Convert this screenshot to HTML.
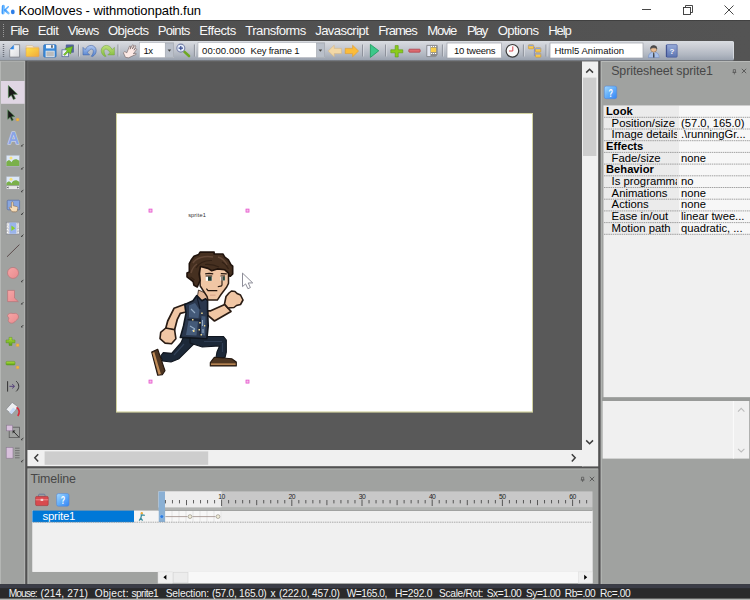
<!DOCTYPE html>
<html><head><meta charset="utf-8"><title>KoolMoves - withmotionpath.fun</title>
<style>
*{box-sizing:border-box;margin:0;padding:0}
html,body{width:750px;height:600px;overflow:hidden;background:#525252}
svg{display:block;position:absolute;left:0;top:0}
svg text{font-family:"Liberation Sans","DejaVu Sans",sans-serif;white-space:pre}
</style></head><body>
<svg width="750" height="600" viewBox="0 0 750 600">
<rect x="0" y="0" width="750" height="600" fill="#525252" />
<rect x="0" y="0" width="750" height="20" fill="#ffffff" />
<defs><linearGradient id="kg" x1="0" y1="0" x2="1" y2="1"><stop offset="0" stop-color="#3f9cff"/><stop offset="1" stop-color="#7cc2ff"/></linearGradient></defs>
<g stroke="url(#kg)" stroke-linecap="round" fill="none"><path d="M3.400 6.400L3.100 12.800" stroke-width="3.200"/><path d="M4.600 10.400L8.300 6.800" stroke-width="1.500"/><path d="M5 10.200L8.600 13.300" stroke-width="2.200"/></g><ellipse cx="12.800" cy="11.900" rx="1.900" ry="2.400" fill="#2e7fe8"/>
<text x="18.6" y="14.7" font-size="13" fill="#000" textLength="182.4" lengthAdjust="spacing" >KoolMoves - withmotionpath.fun</text>
<g stroke="#333" stroke-width=".9" fill="none"><path d="M642 9.5h9"/><rect x="683.5" y="7.5" width="7" height="7"/><path d="M685.5 7.5v-2h7v7h-2"/><path d="M724.5 5.5l9 9M733.5 5.5l-9 9"/></g>
<defs><linearGradient id="mb" x1="0" y1="0" x2="1" y2="0"><stop offset="0" stop-color="#4e4e4e"/><stop offset="1" stop-color="#545454"/></linearGradient></defs>
<rect x="0" y="20" width="750" height="41" fill="url(#mb)" />
<rect x="0" y="20" width="750" height="0.8" fill="#3c3c3c" />
<path d="M3.5 24v13" stroke="#9a9a9a" stroke-width="1" stroke-dasharray="1 1"/>
<text x="10.3" y="35.1" font-size="13.1" fill="#f8f8f8" textLength="18.7" lengthAdjust="spacing" >File</text>
<text x="37.7" y="35.1" font-size="13.1" fill="#f8f8f8" textLength="21.3" lengthAdjust="spacing" >Edit</text>
<text x="67.7" y="35.1" font-size="13.1" fill="#f8f8f8" textLength="31.6" lengthAdjust="spacing" >Views</text>
<text x="108" y="35.1" font-size="13.1" fill="#f8f8f8" textLength="41" lengthAdjust="spacing" >Objects</text>
<text x="157.7" y="35.1" font-size="13.1" fill="#f8f8f8" textLength="32.6" lengthAdjust="spacing" >Points</text>
<text x="199.3" y="35.1" font-size="13.1" fill="#f8f8f8" textLength="37.0" lengthAdjust="spacing" >Effects</text>
<text x="245.3" y="35.1" font-size="13.1" fill="#f8f8f8" textLength="61.0" lengthAdjust="spacing" >Transforms</text>
<text x="315.2" y="35.1" font-size="13.1" fill="#f8f8f8" textLength="53.6" lengthAdjust="spacing" >Javascript</text>
<text x="378.3" y="35.1" font-size="13.1" fill="#f8f8f8" textLength="39.4" lengthAdjust="spacing" >Frames</text>
<text x="427.3" y="35.1" font-size="13.1" fill="#f8f8f8" textLength="30.0" lengthAdjust="spacing" >Movie</text>
<text x="467" y="35.1" font-size="13.1" fill="#f8f8f8" textLength="21.3" lengthAdjust="spacing" >Play</text>
<text x="497.7" y="35.1" font-size="13.1" fill="#f8f8f8" textLength="41.3" lengthAdjust="spacing" >Options</text>
<text x="548.3" y="35.1" font-size="13.1" fill="#f8f8f8" textLength="23.4" lengthAdjust="spacing" >Help</text>
<defs><linearGradient id="tb" x1="0" y1="0" x2="0" y2="1"><stop offset="0" stop-color="#d9dce1"/><stop offset="0.3" stop-color="#cacdd4"/><stop offset="0.7" stop-color="#b1b7c1"/><stop offset="1" stop-color="#99a1ae"/></linearGradient><linearGradient id="hb" x1="0" y1="0" x2="1" y2="1"><stop offset="0" stop-color="#a6daff"/><stop offset=".5" stop-color="#62aefa"/><stop offset="1" stop-color="#3484f4"/></linearGradient><linearGradient id="hb2" x1="0" y1="0" x2="0" y2="1"><stop offset="0" stop-color="#98acda"/><stop offset="1" stop-color="#5c74b0"/></linearGradient><linearGradient id="fold" x1="0" y1="0" x2="1" y2="1"><stop offset="0" stop-color="#ffe24a"/><stop offset="1" stop-color="#f0a83a"/></linearGradient><linearGradient id="pg" x1="0" y1="0" x2="1" y2="1"><stop offset="0" stop-color="#ffffff"/><stop offset="1" stop-color="#d8dade"/></linearGradient><linearGradient id="pink" x1="0" y1="0" x2="1" y2="1"><stop offset="0" stop-color="#f6a6a6"/><stop offset="1" stop-color="#e88a8e"/></linearGradient><linearGradient id="grn" x1="0" y1="0" x2="0" y2="1"><stop offset="0" stop-color="#b4e23a"/><stop offset="1" stop-color="#5aa01a"/></linearGradient></defs>
<path d="M0 41h732.500a1.500 1.500 0 0 1 1.500 1.500v16.500a1.500 1.500 0 0 1-1.500 1.500H0z" fill="url(#tb)"/><path d="M733.500 42.500v16" stroke="#dcdfe4" stroke-width=".8"/>
<path d="M3.5 44v13" stroke="#6a6e78" stroke-width="1.4" stroke-dasharray="1 1"/>
<path d="M14.100 44.700h5.500v12.400h-9.900v-7.600z" fill="url(#pg)" stroke="#7c8088" stroke-width=".8"/><path d="M9.700 49.500l4.400-4.800v4.800z" fill="#2a86ea"/><path d="M14.100 44.700v4.800h-4.400" fill="none" stroke="#e8f0fa" stroke-width=".5"/>
<path d="M26.200 45.800h6.400l1 1.400h5v2h-12.400z" fill="#fbf3dc" stroke="#d8a868" stroke-width=".5"/><rect x="26" y="47.800" width="13" height="8.900" rx=".9" fill="url(#fold)" stroke="#dfa25a" stroke-width=".6"/>
<rect x="43.700" y="44.700" width="12.400" height="12.400" rx="1" fill="#3a8ada" stroke="#2a6ab4" stroke-width=".7"/><rect x="46" y="44.900" width="8.200" height="3.500" fill="#f4f6fa"/><rect x="51.200" y="45.200" width="1.500" height="2.600" fill="#3a4a5a"/><rect x="46" y="51.100" width="8.200" height="5.600" fill="#b9bbbd" stroke="#eef2f6" stroke-width=".7"/>
<rect x="65.800" y="44.600" width="8.100" height="8.100" rx=".8" fill="#55659a"/><rect x="62" y="49.800" width="6.500" height="6.900" fill="#eef1f6" stroke="#5a6c9c" stroke-width=".8"/><path d="M63.600 54.400l3.600-3.600-2.200-2.200 7.700-2.200-2.200 7.700-2.200-2.200-3.600 3.600z" fill="#7ac828" stroke="#4c9014" stroke-width=".5"/>
<path d="M78.5 44.5v12" stroke="#8a8e98" stroke-width="1"/><path d="M79.5 44.5v12" stroke="#e8eaee" stroke-width="1" opacity=".6"/>
<defs><linearGradient id="ug" x1="0" y1="0" x2="0" y2="1"><stop offset="0" stop-color="#b4caf0"/><stop offset="1" stop-color="#4f80d0"/></linearGradient><linearGradient id="rg" x1="0" y1="0" x2="0" y2="1"><stop offset="0" stop-color="#bfe07c"/><stop offset="1" stop-color="#82bc3c"/></linearGradient></defs>
<path d="M83 47.400V54.900H89.600L87.400 52.700C88.600 50.400 90.400 49.100 91.600 49.100C92.800 49.100 93.400 50.400 93.300 51.600C93.200 53.600 92.400 55 91.200 56.200L92.400 56.600C94.800 55.400 96.200 53 96.200 50.700C96.200 47.600 93.800 45.400 91.200 45.400C88.800 45.400 86.600 46.800 85.200 49.600Z" fill="url(#ug)" stroke="#4668a8" stroke-width=".6"/>
<path d="M83 47.400V54.900H89.600L87.400 52.700C88.600 50.400 90.400 49.100 91.600 49.100C92.800 49.100 93.400 50.400 93.300 51.600C93.200 53.600 92.400 55 91.200 56.200L92.400 56.600C94.800 55.400 96.200 53 96.200 50.700C96.200 47.600 93.800 45.400 91.200 45.400C88.800 45.400 86.600 46.800 85.200 49.600Z" transform="translate(197.400 0) scale(-1 1)" fill="url(#rg)" stroke="#7aa84a" stroke-width=".6"/>
<path d="M118 44.5v12" stroke="#8a8e98" stroke-width="1"/><path d="M119 44.5v12" stroke="#e8eaee" stroke-width="1" opacity=".6"/>
<path d="M123.400 52.800l1.400-1.200 2 1.200 2.800-6.800 1.100.4-.6 2.800 2.400-4.400 1.200.6-1.400 3.600 2.600-3.600 1 .8-2 4 2-1.800.8 1-3.400 4.400 2.600-.6.200 1.200-5 2.200-2.400 1.200-3.200-.4z" fill="#fdeae6" stroke="#6c5c5c" stroke-width=".6" stroke-linejoin="round"/>
<rect x="139.4" y="42.6" width="34.2" height="15" fill="#ffffff" stroke="#aeb2ba" stroke-width=".6"/>
<rect x="165.2" y="43" width="8.2" height="14.2" fill="#bac0ca" stroke="#9a9ea6" stroke-width=".5"/>
<path d="M167.6 49.6h3.6l-1.8 2.2z" fill="#444"/>
<text x="143.6" y="54" font-size="9.6" fill="#111" textLength="9.4" lengthAdjust="spacing" >1x</text>
<path d="M184 51.400l5 4.600" stroke="#6ea822" stroke-width="2.600" stroke-linecap="round"/><circle cx="180.800" cy="48.100" r="4" fill="#e6eefb" stroke="#7c86aa" stroke-width="1.100"/><path d="M178.600 48.100h4.400M180.800 45.900v4.400" stroke="#3a4c90" stroke-width="1.200"/>
<path d="M194.4 44.5v12" stroke="#8a8e98" stroke-width="1"/><path d="M195.4 44.5v12" stroke="#e8eaee" stroke-width="1" opacity=".6"/>
<rect x="198" y="42.6" width="126.4" height="15" fill="#ffffff" stroke="#aeb2ba" stroke-width=".6"/>
<rect x="316.4" y="43" width="8" height="14.2" fill="#bac0ca" stroke="#9a9ea6" stroke-width=".5"/>
<path d="M318.6 49.6h3.6l-1.8 2.2z" fill="#444"/>
<text x="202" y="54" font-size="9.5" fill="#111" textLength="43" lengthAdjust="spacing" >00:00.000</text>
<text x="250.6" y="54" font-size="9.5" fill="#111" textLength="49" lengthAdjust="spacing" >Key frame 1</text>
<path d="M328.2 51l6-5.8v3.2h7.2v5.2h-7.2v3.2z" fill="#f2d8a6" stroke="#d8b884" stroke-width=".6"/>
<path d="M358.6 51l-6-5.8v3.2h-7.4v5.2h7.4v3.2z" fill="#fbbc3a" stroke="#e09a2a" stroke-width=".6"/>
<path d="M362.6 44.5v12" stroke="#8a8e98" stroke-width="1"/><path d="M363.6 44.5v12" stroke="#e8eaee" stroke-width="1" opacity=".6"/>
<path d="M370.4 44.4l8.4 6.4-8.4 6.6z" fill="#3cc88a" stroke="#1a9a5a" stroke-width=".8"/>
<path d="M385.6 44.5v12" stroke="#8a8e98" stroke-width="1"/><path d="M386.6 44.5v12" stroke="#e8eaee" stroke-width="1" opacity=".6"/>
<path d="M395.2 45.6h3v4.2h4.6v3h-4.6V57h-3v-4.2h-4.4v-3h4.4z" fill="#8ccc1a" stroke="#5a9a10" stroke-width=".6"/>
<rect x="408.800" y="49.200" width="11.400" height="3" rx=".8" fill="#dc6a70" stroke="#ae3a44" stroke-width=".7"/>
<path d="M426.800 45.400h10.400v9.200l-1.800 2h-8.600z" fill="#e4e8f2" stroke="#77797d" stroke-width=".8"/><rect x="430.400" y="45.600" width="6.600" height="10.600" fill="#8a8a8c"/><rect x="430.800" y="47.600" width="5.400" height="4.600" fill="#fbd04a"/><g fill="#fff"><rect x="431" y="46" width="1.200" height="1"/><rect x="433" y="46" width="1.200" height="1"/><rect x="435" y="46" width="1.200" height="1"/><rect x="431" y="53" width="1.200" height="1"/><rect x="433" y="53" width="1.200" height="1"/><rect x="435" y="53" width="1.200" height="1"/></g>
<path d="M442.4 44.5v12" stroke="#8a8e98" stroke-width="1"/><path d="M443.4 44.5v12" stroke="#e8eaee" stroke-width="1" opacity=".6"/>
<rect x="447" y="43" width="54.6" height="15" fill="#ffffff" stroke="#9ea2aa" stroke-width=".7"/>
<text x="454" y="54" font-size="9.5" fill="#111" textLength="41.6" lengthAdjust="spacing" >10 tweens</text>
<circle cx="512.400" cy="50.800" r="6.300" fill="#fbfbfb" stroke="#3a3a3a" stroke-width="1.200"/><path d="M512.800 46.400v4.600h-3.800" stroke="#d8444c" stroke-width="1" fill="none"/>
<path d="M523.4 44.5v12" stroke="#8a8e98" stroke-width="1"/><path d="M524.4 44.5v12" stroke="#e8eaee" stroke-width="1" opacity=".6"/>
<path d="M534.400 48.600v7h1.200M534.400 50h1.200M533.400 47h1v1.600" stroke="#7a86c8" stroke-width=".8" fill="none"/><g stroke="#c08a2a" stroke-width=".5"><rect x="528.400" y="44.800" width="5.200" height="4" rx=".6" fill="#f8c84a"/><rect x="535.400" y="47.800" width="5.400" height="4.200" rx=".6" fill="#f8c84a"/><rect x="535.400" y="53.200" width="5.400" height="4" rx=".6" fill="#f8c84a"/></g><rect x="528.600" y="44.900" width="4.800" height="1.300" fill="#88a2dc"/><rect x="535.600" y="47.900" width="5" height="1.300" fill="#88a2dc"/><rect x="535.600" y="53.300" width="5" height="1.300" fill="#88a2dc"/>
<path d="M546 44.5v12" stroke="#8a8e98" stroke-width="1"/><path d="M547 44.5v12" stroke="#e8eaee" stroke-width="1" opacity=".6"/>
<rect x="550" y="43" width="93" height="15" fill="#ffffff" stroke="#9ea2aa" stroke-width=".7"/>
<text x="554.4" y="54" font-size="9.5" fill="#111" textLength="69.6" lengthAdjust="spacing" >Html5 Animation</text>
<path d="M648.400 57.600c0-3.800 2.200-5.600 5.400-5.600s5.400 1.800 5.400 5.600z" fill="#a9c1ea" stroke="#6a84b8" stroke-width=".5"/><path d="M652.600 52.200h2.400l-1.200 3.600z" fill="#fff"/><path d="M653.800 52.600v5" stroke="#1a1a1a" stroke-width="1.100"/><circle cx="653.700" cy="49" r="3.100" fill="#e9bc94" stroke="#7a5c40" stroke-width=".5"/><path d="M650.500 48.800a3.200 3.200 0 0 1 6.400 0c-1.200-1.400-5.200-1.400-6.400 0z" fill="#4a4a4c" stroke="#4a4a4c" stroke-width=".6"/>
<rect x="666.200" y="44.600" width="11" height="12.600" rx="1" fill="url(#hb2)" stroke="#44589a" stroke-width=".6"/><path d="M666.600 45v12" stroke="#3a4c8c" stroke-width=".9"/>
<text x="669.6" y="54.2" font-size="8" fill="#f4f6fc" font-weight="bold" >?</text>
<rect x="0" y="60.6" width="25.2" height="524.6" fill="#b4b6b4" />
<rect x="1" y="61.6" width="23.2" height="523.6" fill="#a0a2a0" />
<rect x="1" y="81" width="23.6" height="22.8" fill="#e0d6e4" />
<path d="M8.4 85.6 L8.4 97.8 L11.3 95.2 L13.4 99.6 L15.4 98.6 L13.3 94.4 L17.4 94.2z" fill="#1a1a1a" stroke="#4c8a4c" stroke-width=".6" stroke-linejoin="round"/>
<path d="M7.8 109.8 L7.8 119.3 L10.1 117.3 L11.7 120.7 L13.3 119.9 L11.6 116.7 L14.8 116.5z" fill="#1a1a1a" stroke="#4c8a4c" stroke-width=".6" stroke-linejoin="round"/>
<rect x="16.2" y="118.2" width="2.8" height="2.8" rx=".8" fill="#f6b83a" stroke="#c89a5a" stroke-width=".4"/>
<text x="7.8" y="144" font-size="15.8" fill="#8aa4e6" font-weight="bold" stroke="#d6e0f8" stroke-width="1" paint-order="stroke">A</text>
<path d="M21.4 146.2l2-2" stroke="#3a3a3a" stroke-width=".9"/><path d="M21.2 146.6v-1.6l1.6 1.6z" fill="#3a3a3a"/>
<rect x="6.2" y="155.2" width="13.4" height="11" fill="#dce8f8" stroke="#a8acb4" stroke-width=".6"/>
<circle cx="11" cy="158.0" r="1.5" fill="#f6e27a"/>
<path d="M6.4 162.2c1.6-2.6 3.4-2.6 5 0 1.6-3 4.6-4.4 8-1.4v5.2H6.4z" fill="#7ab04a"/>
<path d="M21.4 169.2l2-2" stroke="#3a3a3a" stroke-width=".9"/><path d="M21.2 169.6v-1.6l1.6 1.6z" fill="#3a3a3a"/>
<rect x="6.2" y="176.4" width="13.4" height="9.4" fill="#dce8f8" stroke="#a8acb4" stroke-width=".6"/>
<circle cx="11" cy="179.20000000000002" r="1.5" fill="#f6e27a"/>
<path d="M6.4 183.4c1.6-2.6 3.4-2.6 5 0 1.6-3 4.6-4.4 8-1.4v3.6000000000000005H6.4z" fill="#7ab04a"/>
<rect x="6.2" y="185.8" width="13.4" height="3.6" fill="#e8e8e8" stroke="#8a8a92" stroke-width=".5"/><path d="M7 187.6l1.4-1v2zM18.8 187.6l-1.4-1v2z" fill="#223"/>
<path d="M21.4 191.79999999999998l2-2" stroke="#3a3a3a" stroke-width=".9"/><path d="M21.2 192.2v-1.6l1.6 1.6z" fill="#3a3a3a"/>
<rect x="7.2" y="200.2" width="12.4" height="9.6" rx="1" fill="#88a6e0" stroke="#5a6ea0" stroke-width=".7"/>
<path d="M11.4 202.2c.8-.8 1.8-.4 1.8.6v3l3.6.8c.8.2 1.2.8 1 1.6l-.6 2.6c-.2.6-.6 1-1.4 1h-3c-.6 0-1-.2-1.400-.8l-2-3c-.4-.8.6-1.600 1.400-.800l.6.600z" fill="#f6dcb8" stroke="#7a5a3a" stroke-width=".5"/>
<path d="M21.4 214.6l2-2" stroke="#3a3a3a" stroke-width=".9"/><path d="M21.2 215.0v-1.6l1.6 1.6z" fill="#3a3a3a"/>
<rect x="6.2" y="222.2" width="13.4" height="12" fill="#e6e6ea" stroke="#7a7e88" stroke-width=".6"/><rect x="9.4" y="222.6" width="7" height="11.2" fill="#9ab4ea"/><path d="M11.4 225.4l3.8 2.8-3.8 2.8z" fill="#8ad02a"/>
<g fill="#fff" stroke="#9a9a9a" stroke-width=".3"><rect x="6.8" y="223.2" width="1.8" height="1.6"/><rect x="6.8" y="226" width="1.8" height="1.6"/><rect x="6.8" y="228.800" width="1.8" height="1.6"/><rect x="6.8" y="231.600" width="1.8" height="1.6"/><rect x="17.2" y="223.2" width="1.8" height="1.6"/><rect x="17.2" y="226" width="1.8" height="1.6"/><rect x="17.2" y="228.8" width="1.8" height="1.6"/><rect x="17.2" y="231.6" width="1.8" height="1.6"/></g>
<path d="M21.4 236.6l2-2" stroke="#3a3a3a" stroke-width=".9"/><path d="M21.2 237.0v-1.6l1.6 1.6z" fill="#3a3a3a"/>
<path d="M7 256.800L19.400 244.600" stroke="#5c4c4c" stroke-width="1"/>
<circle cx="13" cy="272.900" r="5.500" fill="url(#pink)" stroke="#b87478" stroke-width=".7"/>
<path d="M21.4 281.8l2-2" stroke="#3a3a3a" stroke-width=".9"/><path d="M21.2 282.20000000000005v-1.6l1.6 1.6z" fill="#3a3a3a"/>
<path d="M7.600 290.400h6.900v7.600l3.800 3.600H7.600z" fill="url(#pink)" stroke="#b87478" stroke-width=".7"/>
<path d="M21.4 304.2l2-2" stroke="#3a3a3a" stroke-width=".9"/><path d="M21.2 304.6v-1.6l1.6 1.6z" fill="#3a3a3a"/>
<path d="M9.600 313.500c1.800-.8 3.200.3 4.400 0 1.800-.5 3.600.2 4.300 2.200.600 1.900-.5 3.400-1.600 4.300-1.300 1-2.200 2.600-4 3.100-1.700.400-3.600-.4-4.300-1.900-.5-1.200.6-2 .4-3.100-.2-1-1.400-1.500-1.200-2.700.200-1 1-1.600 2-1.900z" fill="url(#pink)" stroke="#b87478" stroke-width=".7"/>
<path d="M21.4 327.0l2-2" stroke="#3a3a3a" stroke-width=".9"/><path d="M21.2 327.40000000000003v-1.6l1.6 1.6z" fill="#3a3a3a"/>
<path d="M9 337.400h3v2.600h3v2.800h-3v2.600H9v-2.600H6v-2.800h3z" fill="url(#grn)" stroke="#5a9420" stroke-width=".5"/>
<rect x="16.2" y="343.800" width="2.800" height="2.800" rx=".6" fill="#f6b83a" stroke="#c89a5a" stroke-width=".4"/>
<rect x="6" y="361.400" width="9" height="3.600" rx="1" fill="url(#grn)" stroke="#5a9420" stroke-width=".5"/>
<rect x="16.2" y="366" width="2.800" height="2.800" rx=".6" fill="#f6b83a" stroke="#c89a5a" stroke-width=".4"/>
<path d="M7.600 381.200v10.400" stroke="#333" stroke-width="1"/><path d="M9.400 386.300h4.600M12.200 384.200l2.400 2.100-2.400 2.100" stroke="#54407a" stroke-width="1" fill="none"/><path d="M16.200 381.200c3.400 3 3.400 7.200 0 10.200" stroke="#333" stroke-width="1" fill="none"/>
<path d="M12.200 402.400l6 4.600-6.600 7.200-5.600-4.800z" fill="#eceef0" stroke="#7a7e84" stroke-width=".6"/><path d="M15.800 409.600l-4.200 4.600-2.400-2 4-4.800z" fill="#c8daf6"/><path d="M16.600 407.400c2.800 2 3.200 5.400 1.200 8.600" stroke="#d82a3a" stroke-width="1.500" fill="none"/>
<rect x="9.200" y="427.200" width="10.200" height="10.400" fill="none" stroke="#5a5a5a" stroke-width=".8"/><rect x="6.600" y="425.200" width="6" height="5.600" fill="#d8c0dc" stroke="#8a7a90" stroke-width=".6"/><path d="M13 431l5.800 6" stroke="#222" stroke-width=".9"/><path d="M12.600 430.600h2.800l-2.800 2.800z" fill="#222"/>
<path d="M21.4 439.8l2-2" stroke="#3a3a3a" stroke-width=".9"/><path d="M21.2 440.20000000000005v-1.6l1.6 1.6z" fill="#3a3a3a"/>
<rect x="6.200" y="447.400" width="6.800" height="10.800" fill="#d8c0dc" stroke="#8a7a90" stroke-width=".6"/><path d="M15 448.200h4.600M15 450.600h4.600M15 453h4.600M15 455.400h4.600M15 457.800h4.600" stroke="#666" stroke-width=".8"/>
<path d="M21.4 461.8l2-2" stroke="#3a3a3a" stroke-width=".9"/><path d="M21.2 462.20000000000005v-1.6l1.6 1.6z" fill="#3a3a3a"/>
<rect x="27.4" y="61" width="555" height="389" fill="#6a6a6a" />
<rect x="28.2" y="61.6" width="554" height="388.4" fill="#595959" />
<rect x="116" y="113" width="417" height="299.6" fill="#d2d2a0" />
<rect x="117" y="114" width="415" height="297.4" fill="#ffffff" />
<rect x="582" y="61.4" width="16.2" height="405" fill="#f0f0f0" />
<rect x="583" y="77.6" width="13.4" height="78.4" fill="#cdcdcd" />
<path d="M586.200 72.600l3.400-3.400 3.400 3.400" stroke="#3c3c3c" stroke-width="1.500" fill="none"/>
<path d="M586.200 440.400l3.400 3.400 3.400-3.400" stroke="#3c3c3c" stroke-width="1.500" fill="none"/>
<rect x="27.4" y="450" width="556" height="16.2" fill="#f0f0f0" />
<rect x="44.6" y="451.4" width="163.6" height="13.4" fill="#cdcdcd" />
<path d="M38.200 454.200l-3.400 3.600 3.400 3.600" stroke="#3c3c3c" stroke-width="1.500" fill="none"/>
<path d="M571.800 454.200l3.400 3.600-3.400 3.600" stroke="#3c3c3c" stroke-width="1.500" fill="none"/>
<rect x="600.6" y="61" width="149.4" height="524.2" fill="#b8bab8" />
<rect x="601.7" y="62" width="148.3" height="523.2" fill="#a0a2a0" />
<text x="611.2" y="75.2" font-size="12.4" fill="#474747" textLength="101.8" lengthAdjust="spacing" >Spritesheet sprite1</text>
<path d="M733.3 69.6h2.200v2.800h-2.200zM732.5 72.4h3.800M734.4 72.4v2" stroke="#5a5a5a" stroke-width=".8" fill="none"/>
<path d="M741.8 68.8l4.400 4.400M746.2 68.8l-4.400 4.400" stroke="#555" stroke-width=".9"/>
<rect x="604.3" y="86.1" width="12.4" height="12.6" rx="1.800" fill="url(#hb)" stroke="#5686d4" stroke-width=".6"/>
<g transform="translate(610.70 96.60) scale(.72 1)">
<text x="0" y="0" font-size="10" fill="#fff" font-weight="bold" text-anchor="middle" >?</text>
</g>
<rect x="603" y="105.4" width="147" height="292" fill="#c8c8c8" />
<rect x="604" y="105.8" width="146" height="291.4" fill="#f0f0f0" />
<rect x="604" y="105.8" width="75" height="128.4" fill="#ebebeb" />
<rect x="679" y="105.8" width="71" height="128.4" fill="#f7f7f7" />
<clipPath id="lc"><rect x="604" y="105" width="73" height="130"/></clipPath>
<clipPath id="rc0"><rect x="604" y="105.90" width="146" height="11.20"/></clipPath>
<text x="606" y="114.8" font-size="11.2" fill="#000" font-weight="bold" clip-path="url(#rc0)">Look</text>
<path d="M604 117.30H750" stroke="#8c8c8c" stroke-width=".8" stroke-dasharray="1.5 .7"/>
<clipPath id="rc1"><rect x="604" y="117.60" width="146" height="11.20"/></clipPath>
<g clip-path="url(#lc)">
<text x="611.6" y="126.5" font-size="11.3" fill="#000" clip-path="url(#rc1)">Position/size</text>
</g>
<text x="681" y="126.5" font-size="11.2" fill="#000" clip-path="url(#rc1)">(57.0, 165.0)</text>
<path d="M604 129.00H750" stroke="#8c8c8c" stroke-width=".8" stroke-dasharray="1.5 .7"/>
<clipPath id="rc2"><rect x="604" y="129.30" width="146" height="11.20"/></clipPath>
<g clip-path="url(#lc)">
<text x="611.6" y="138.2" font-size="11.3" fill="#000" clip-path="url(#rc2)">Image details</text>
</g>
<text x="681" y="138.2" font-size="11.2" fill="#000" clip-path="url(#rc2)">.\runningGr...</text>
<path d="M604 140.70H750" stroke="#8c8c8c" stroke-width=".8" stroke-dasharray="1.5 .7"/>
<clipPath id="rc3"><rect x="604" y="141.00" width="146" height="11.20"/></clipPath>
<text x="606" y="149.9" font-size="11.2" fill="#000" font-weight="bold" clip-path="url(#rc3)">Effects</text>
<path d="M604 152.40H750" stroke="#8c8c8c" stroke-width=".8" stroke-dasharray="1.5 .7"/>
<clipPath id="rc4"><rect x="604" y="152.70" width="146" height="11.20"/></clipPath>
<g clip-path="url(#lc)">
<text x="611.6" y="161.6" font-size="11.3" fill="#000" clip-path="url(#rc4)">Fade/size</text>
</g>
<text x="681" y="161.6" font-size="11.2" fill="#000" clip-path="url(#rc4)">none</text>
<path d="M604 164.10H750" stroke="#8c8c8c" stroke-width=".8" stroke-dasharray="1.5 .7"/>
<clipPath id="rc5"><rect x="604" y="164.40" width="146" height="11.20"/></clipPath>
<text x="606" y="173.3" font-size="11.2" fill="#000" font-weight="bold" clip-path="url(#rc5)">Behavior</text>
<path d="M604 175.80H750" stroke="#8c8c8c" stroke-width=".8" stroke-dasharray="1.5 .7"/>
<clipPath id="rc6"><rect x="604" y="176.10" width="146" height="11.20"/></clipPath>
<g clip-path="url(#lc)">
<text x="611.6" y="185.0" font-size="11.3" fill="#000" clip-path="url(#rc6)">Is programmable</text>
</g>
<text x="681" y="185.0" font-size="11.2" fill="#000" clip-path="url(#rc6)">no</text>
<path d="M604 187.50H750" stroke="#8c8c8c" stroke-width=".8" stroke-dasharray="1.5 .7"/>
<clipPath id="rc7"><rect x="604" y="187.80" width="146" height="11.20"/></clipPath>
<g clip-path="url(#lc)">
<text x="611.6" y="196.7" font-size="11.3" fill="#000" clip-path="url(#rc7)">Animations</text>
</g>
<text x="681" y="196.7" font-size="11.2" fill="#000" clip-path="url(#rc7)">none</text>
<path d="M604 199.20H750" stroke="#8c8c8c" stroke-width=".8" stroke-dasharray="1.5 .7"/>
<clipPath id="rc8"><rect x="604" y="199.50" width="146" height="11.20"/></clipPath>
<g clip-path="url(#lc)">
<text x="611.6" y="208.4" font-size="11.3" fill="#000" clip-path="url(#rc8)">Actions</text>
</g>
<text x="681" y="208.4" font-size="11.2" fill="#000" clip-path="url(#rc8)">none</text>
<path d="M604 210.90H750" stroke="#8c8c8c" stroke-width=".8" stroke-dasharray="1.5 .7"/>
<clipPath id="rc9"><rect x="604" y="211.20" width="146" height="11.20"/></clipPath>
<g clip-path="url(#lc)">
<text x="611.6" y="220.1" font-size="11.3" fill="#000" clip-path="url(#rc9)">Ease in/out</text>
</g>
<text x="681" y="220.1" font-size="11.2" fill="#000" clip-path="url(#rc9)">linear twee...</text>
<path d="M604 222.60H750" stroke="#8c8c8c" stroke-width=".8" stroke-dasharray="1.5 .7"/>
<clipPath id="rc10"><rect x="604" y="222.90" width="146" height="11.20"/></clipPath>
<g clip-path="url(#lc)">
<text x="611.6" y="231.8" font-size="11.3" fill="#000" clip-path="url(#rc10)">Motion path</text>
</g>
<text x="681" y="231.8" font-size="11.2" fill="#000" clip-path="url(#rc10)">quadratic, ...</text>
<path d="M604 234.30H750" stroke="#8c8c8c" stroke-width=".8" stroke-dasharray="1.5 .7"/>
<rect x="602" y="397.4" width="148" height="3.6" fill="#989a98" />
<rect x="602.6" y="401" width="146.6" height="57.6" fill="#f0f0f0" />
<path d="M733.400 401v57.600" stroke="#fbfbfb" stroke-width="1"/>
<path d="M738 411.600l3.200-3.200 3.200 3.200" stroke="#bdbdbd" stroke-width="1.100" fill="none"/>
<path d="M738 448.800l3.200 3.200 3.200-3.200" stroke="#bdbdbd" stroke-width="1.100" fill="none"/>
<rect x="27.4" y="468.4" width="570.8" height="117" fill="#b8bab8" />
<rect x="28.4" y="469.4" width="569.8" height="116" fill="#a0a2a0" />
<text x="30.4" y="483.3" font-size="12.4" fill="#474747" textLength="45.6" lengthAdjust="spacing" >Timeline</text>
<path d="M581.5 477.20000000000005h2.200v2.800h-2.200zM580.7 480.0h3.800M582.6 480.0v2" stroke="#5a5a5a" stroke-width=".8" fill="none"/>
<path d="M589.8 476.8l4.400 4.400M594.2 476.8l-4.400 4.400" stroke="#555" stroke-width=".9"/>
<rect x="38.600" y="494.200" width="6.400" height="3" rx="1" fill="none" stroke="#6a7a9a" stroke-width="1"/><rect x="35.600" y="496.400" width="12.600" height="9.200" rx="1.200" fill="#d84a4e" stroke="#a83236" stroke-width=".6"/><path d="M35.600 499.800h12.600" stroke="#f0a0a0" stroke-width=".8"/><rect x="40.600" y="498.800" width="2.600" height="2.200" fill="#f4d0d0"/>
<rect x="56.6" y="493.6" width="12.4" height="12.6" rx="1.800" fill="url(#hb)" stroke="#5686d4" stroke-width=".6"/>
<g transform="translate(63.00 504.10) scale(.72 1)">
<text x="0" y="0" font-size="10" fill="#fff" font-weight="bold" text-anchor="middle" >?</text>
</g>
<rect x="158.5" y="491.4" width="434" height="16.2" fill="#c8c8c8" />
<rect x="158.5" y="491.4" width="63" height="16.2" fill="#ececec" />
<rect x="158.5" y="507.6" width="434" height="2.8" fill="#b2b4b2" />
<rect x="32" y="510.4" width="560.5" height="61.5" fill="#dcdcdc" />
<rect x="33" y="510.4" width="559.5" height="61.5" fill="#f0f0f0" />
<rect x="158.5" y="510.4" width="63" height="11.6" fill="#f7f7f7" />
<path d="M165 510.800v11.200" stroke="#dadada" stroke-width=".7"/>
<path d="M172 510.800v11.200" stroke="#dadada" stroke-width=".7"/>
<path d="M179 510.800v11.200" stroke="#dadada" stroke-width=".7"/>
<path d="M186 510.800v11.200" stroke="#dadada" stroke-width=".7"/>
<path d="M193 510.800v11.200" stroke="#dadada" stroke-width=".7"/>
<path d="M200 510.800v11.200" stroke="#dadada" stroke-width=".7"/>
<path d="M207 510.800v11.200" stroke="#dadada" stroke-width=".7"/>
<path d="M214 510.800v11.200" stroke="#dadada" stroke-width=".7"/>
<path d="M221 510.800v11.200" stroke="#dadada" stroke-width=".7"/>
<path d="M33 510.500H592.500" stroke="#909290" stroke-width=".8"/>
<rect x="158.5" y="491.4" width="6.5" height="30.6" fill="#8ab0d4" />
<path d="M165.44 500v3.400" stroke="#3a3a3a" stroke-width=".8"/>
<path d="M172.46 500v3.400" stroke="#3a3a3a" stroke-width=".8"/>
<path d="M179.48 500v3.400" stroke="#3a3a3a" stroke-width=".8"/>
<path d="M186.5 500v5.200" stroke="#3a3a3a" stroke-width=".8"/>
<path d="M193.52 500v3.400" stroke="#3a3a3a" stroke-width=".8"/>
<path d="M200.54 500v3.400" stroke="#3a3a3a" stroke-width=".8"/>
<path d="M207.56 500v3.400" stroke="#3a3a3a" stroke-width=".8"/>
<path d="M214.58 500v3.400" stroke="#3a3a3a" stroke-width=".8"/>
<path d="M221.6 499.600v6.400" stroke="#3a3a3a" stroke-width=".8"/>
<text x="221.79999999999998" y="499.3" font-size="6.8" fill="#222" textLength="7" lengthAdjust="spacing" text-anchor="middle" >10</text>
<path d="M228.62 500v3.400" stroke="#3a3a3a" stroke-width=".8"/>
<path d="M235.64 500v3.400" stroke="#3a3a3a" stroke-width=".8"/>
<path d="M242.66 500v3.400" stroke="#3a3a3a" stroke-width=".8"/>
<path d="M249.68 500v3.400" stroke="#3a3a3a" stroke-width=".8"/>
<path d="M256.7 500v5.200" stroke="#3a3a3a" stroke-width=".8"/>
<path d="M263.72 500v3.400" stroke="#3a3a3a" stroke-width=".8"/>
<path d="M270.74 500v3.400" stroke="#3a3a3a" stroke-width=".8"/>
<path d="M277.76 500v3.400" stroke="#3a3a3a" stroke-width=".8"/>
<path d="M284.78 500v3.400" stroke="#3a3a3a" stroke-width=".8"/>
<path d="M291.8 499.600v6.400" stroke="#3a3a3a" stroke-width=".8"/>
<text x="292.0" y="499.3" font-size="6.8" fill="#222" textLength="7" lengthAdjust="spacing" text-anchor="middle" >20</text>
<path d="M298.82 500v3.400" stroke="#3a3a3a" stroke-width=".8"/>
<path d="M305.84 500v3.400" stroke="#3a3a3a" stroke-width=".8"/>
<path d="M312.86 500v3.400" stroke="#3a3a3a" stroke-width=".8"/>
<path d="M319.88 500v3.400" stroke="#3a3a3a" stroke-width=".8"/>
<path d="M326.9 500v5.200" stroke="#3a3a3a" stroke-width=".8"/>
<path d="M333.92 500v3.400" stroke="#3a3a3a" stroke-width=".8"/>
<path d="M340.94 500v3.400" stroke="#3a3a3a" stroke-width=".8"/>
<path d="M347.96 500v3.400" stroke="#3a3a3a" stroke-width=".8"/>
<path d="M354.98 500v3.400" stroke="#3a3a3a" stroke-width=".8"/>
<path d="M362.0 499.600v6.400" stroke="#3a3a3a" stroke-width=".8"/>
<text x="362.2" y="499.3" font-size="6.8" fill="#222" textLength="7" lengthAdjust="spacing" text-anchor="middle" >30</text>
<path d="M369.02 500v3.400" stroke="#3a3a3a" stroke-width=".8"/>
<path d="M376.04 500v3.400" stroke="#3a3a3a" stroke-width=".8"/>
<path d="M383.06 500v3.400" stroke="#3a3a3a" stroke-width=".8"/>
<path d="M390.08 500v3.400" stroke="#3a3a3a" stroke-width=".8"/>
<path d="M397.1 500v5.200" stroke="#3a3a3a" stroke-width=".8"/>
<path d="M404.12 500v3.400" stroke="#3a3a3a" stroke-width=".8"/>
<path d="M411.14 500v3.400" stroke="#3a3a3a" stroke-width=".8"/>
<path d="M418.16 500v3.400" stroke="#3a3a3a" stroke-width=".8"/>
<path d="M425.18 500v3.400" stroke="#3a3a3a" stroke-width=".8"/>
<path d="M432.2 499.600v6.400" stroke="#3a3a3a" stroke-width=".8"/>
<text x="432.4" y="499.3" font-size="6.8" fill="#222" textLength="7" lengthAdjust="spacing" text-anchor="middle" >40</text>
<path d="M439.22 500v3.400" stroke="#3a3a3a" stroke-width=".8"/>
<path d="M446.24 500v3.400" stroke="#3a3a3a" stroke-width=".8"/>
<path d="M453.26 500v3.400" stroke="#3a3a3a" stroke-width=".8"/>
<path d="M460.28 500v3.400" stroke="#3a3a3a" stroke-width=".8"/>
<path d="M467.3 500v5.200" stroke="#3a3a3a" stroke-width=".8"/>
<path d="M474.32 500v3.400" stroke="#3a3a3a" stroke-width=".8"/>
<path d="M481.34 500v3.400" stroke="#3a3a3a" stroke-width=".8"/>
<path d="M488.36 500v3.400" stroke="#3a3a3a" stroke-width=".8"/>
<path d="M495.38 500v3.400" stroke="#3a3a3a" stroke-width=".8"/>
<path d="M502.4 499.600v6.400" stroke="#3a3a3a" stroke-width=".8"/>
<text x="502.59999999999997" y="499.3" font-size="6.8" fill="#222" textLength="7" lengthAdjust="spacing" text-anchor="middle" >50</text>
<path d="M509.42 500v3.400" stroke="#3a3a3a" stroke-width=".8"/>
<path d="M516.44 500v3.400" stroke="#3a3a3a" stroke-width=".8"/>
<path d="M523.46 500v3.400" stroke="#3a3a3a" stroke-width=".8"/>
<path d="M530.48 500v3.400" stroke="#3a3a3a" stroke-width=".8"/>
<path d="M537.5 500v5.200" stroke="#3a3a3a" stroke-width=".8"/>
<path d="M544.52 500v3.400" stroke="#3a3a3a" stroke-width=".8"/>
<path d="M551.54 500v3.400" stroke="#3a3a3a" stroke-width=".8"/>
<path d="M558.56 500v3.400" stroke="#3a3a3a" stroke-width=".8"/>
<path d="M565.58 500v3.400" stroke="#3a3a3a" stroke-width=".8"/>
<path d="M572.6 499.600v6.400" stroke="#3a3a3a" stroke-width=".8"/>
<text x="572.8000000000001" y="499.3" font-size="6.8" fill="#222" textLength="7" lengthAdjust="spacing" text-anchor="middle" >60</text>
<path d="M579.62 500v3.400" stroke="#3a3a3a" stroke-width=".8"/>
<path d="M586.64 500v3.400" stroke="#3a3a3a" stroke-width=".8"/>
<rect x="32.4" y="510.6" width="101.6" height="11.6" fill="#0078d7" />
<text x="42.4" y="520.4" font-size="11.4" fill="#ffffff" textLength="33" lengthAdjust="spacing" >sprite1</text>
<rect x="134" y="510.6" width="24.5" height="11.6" fill="#f4f4f4" />
<circle cx="141.800" cy="513.200" r="1.200" fill="#eaa83a"/><path d="M140.600 515.200l1.400-.4 2.800.6M141.600 514.800l-.8 3.200 1.800 2.600M140.800 518l-1.600 2.600" stroke="#3c8c9c" stroke-width="1.300" fill="none"/>
<path d="M33 522.200H592" stroke="#8c8c8c" stroke-width=".7" stroke-dasharray="1.500 .8"/>
<path d="M165.400 516.600H187.400M192.600 516.600H215.400" stroke="#9c8c86" stroke-width=".8"/>
<circle cx="161.800" cy="516.600" r="1.900" fill="#2a7ae0" stroke="#9cc4ee" stroke-width=".6"/>
<circle cx="190" cy="516.600" r="1.900" fill="#f0ecd8" stroke="#8a8478" stroke-width=".6"/><circle cx="218" cy="516.600" r="1.900" fill="#f0ecd8" stroke="#8a8478" stroke-width=".6"/>
<rect x="158" y="571.9" width="434.5" height="11.2" fill="#f8f8f8" />
<rect x="158" y="571.9" width="14.4" height="11.2" fill="#f0f0f0" stroke="#dcdcdc" stroke-width=".5"/>
<path d="M166.400 574.800v5l-3-2.500z" fill="#000"/>
<rect x="173.6" y="572.4" width="14.4" height="10.4" fill="#ececec" stroke="#d4d4d4" stroke-width=".6"/>
<rect x="578.4" y="571.9" width="14.1" height="11.2" fill="#f0f0f0" stroke="#dcdcdc" stroke-width=".5"/>
<path d="M584.200 574.800v5l3-2.500z" fill="#000"/>
<rect x="0" y="584.2" width="750" height="15.8" fill="#2a2a2b" />
<rect x="0" y="584.2" width="750" height="4" fill="#3b3d47" />
<rect x="0" y="598.6" width="750" height="1.4" fill="#b4b6b4" />
<text x="8.7" y="596.6" font-size="10.2" fill="#f2f2f2" textLength="28.8" lengthAdjust="spacing" >Mouse:</text>
<text x="40.5" y="596.6" font-size="10.2" fill="#f2f2f2" textLength="47.5" lengthAdjust="spacing" >(214, 271)</text>
<text x="94.7" y="596.6" font-size="10.2" fill="#f2f2f2" textLength="33.8" lengthAdjust="spacing" >Object:</text>
<text x="131.5" y="596.6" font-size="10.2" fill="#f2f2f2" textLength="27.2" lengthAdjust="spacing" >sprite1</text>
<text x="165.7" y="596.6" font-size="10.2" fill="#f2f2f2" textLength="43.3" lengthAdjust="spacing" >Selection:</text>
<text x="212" y="596.6" font-size="10.2" fill="#f2f2f2" textLength="54.7" lengthAdjust="spacing" >(57.0, 165.0)</text>
<text x="270.5" y="596.6" font-size="10.2" fill="#f2f2f2" textLength="4.5" lengthAdjust="spacing" >x</text>
<text x="279" y="596.6" font-size="10.2" fill="#f2f2f2" textLength="61" lengthAdjust="spacing" >(222.0, 457.0)</text>
<text x="346.7" y="596.6" font-size="10.2" fill="#f2f2f2" textLength="40.6" lengthAdjust="spacing" >W=165.0,</text>
<text x="395" y="596.6" font-size="10.2" fill="#f2f2f2" textLength="37.3" lengthAdjust="spacing" >H=292.0</text>
<text x="439" y="596.6" font-size="10.2" fill="#f2f2f2" textLength="44.3" lengthAdjust="spacing" >Scale/Rot:</text>
<text x="486.7" y="596.6" font-size="10.2" fill="#f2f2f2" textLength="35.0" lengthAdjust="spacing" >Sx=1.00</text>
<text x="526" y="596.6" font-size="10.2" fill="#f2f2f2" textLength="34.7" lengthAdjust="spacing" >Sy=1.00</text>
<text x="564.7" y="596.6" font-size="10.2" fill="#f2f2f2" textLength="31.0" lengthAdjust="spacing" >Rb=.00</text>
<text x="600" y="596.6" font-size="10.2" fill="#f2f2f2" textLength="30.7" lengthAdjust="spacing" >Rc=.00</text>
<rect x="149.0" y="209.1" width="3" height="3" fill="#f6bcea" stroke="#e552cc" stroke-width=".8"/>
<rect x="246.0" y="209.1" width="3" height="3" fill="#f6bcea" stroke="#e552cc" stroke-width=".8"/>
<rect x="149.0" y="380.1" width="3" height="3" fill="#f6bcea" stroke="#e552cc" stroke-width=".8"/>
<rect x="246.0" y="380.1" width="3" height="3" fill="#f6bcea" stroke="#e552cc" stroke-width=".8"/>
<text x="188.2" y="217.2" font-size="5.6" fill="#333" textLength="17.6" lengthAdjust="spacing" >sprite1</text>
<g stroke-linejoin="round">
<path d="M185.500 304l-11.500 4.300-6.300 12.700-2 7.500 8.900 1.300 2.600-10.100 3.100-6.400 5.600-1.300z" fill="#f0c6a4" stroke="#2a1c14" stroke-width="1.700"/>
<path d="M165.800 328l-5.100 4.300-.7 6.400 5.100 4.400 6.400.6 4.400-5-1.300-8.900z" fill="#f0c6a4" stroke="#2a1c14" stroke-width="1.600"/>
<path d="M183.700 336.500l-2.700 6.200-9.300 10.600-8.400-.6-2.600 3.300 1.800 5 8.500 1 8-3.300 13.400-13.400 5.300-4.300z" fill="#1c2838" stroke="#10161f" stroke-width="1.200"/>
<path d="M184 344l-10 11" stroke="#3a4c66" stroke-width="1.200" opacity=".7"/>
<path d="M151.700 352l6-2.700 7.300 21.400-2.700 4-4.600.6z" fill="#4e3622" stroke="#22160e" stroke-width="1.100"/><path d="M152.400 352.900l1.900-.8 6.600 22-2.300.7z" fill="#c08c58"/>
<path d="M190 336.500h33.500l2.800 3.500v12l-1.300 5.500h-9l1-5.500 2.700-6.200-17.400 1.200-12.300-4z" fill="#1c2838" stroke="#10161f" stroke-width="1.200"/>
<path d="M204 341.500h18M222.500 343v9" stroke="#3a4c66" stroke-width="1.200" opacity=".6"/>
<path d="M214.300 357.300l17.400 1.400 4.600 3.300v4h-26l0-3.500z" fill="#4e3622" stroke="#22160e" stroke-width="1.100"/><path d="M211 363.400h24.600v1.500H211z" fill="#c08c58"/>
<path d="M207.600 310.800l3.100 0 14-6.300 6.300 6.900-16.500 9.600-6.900-5.800z" fill="#f0c6a4" stroke="#2a1c14" stroke-width="1.700"/>
<path d="M226 296.500l3-3.500 2.500-2 3.500.5 2 2 3.500 1.500 2.500 5-2.500 4.500-4 1-2.500 2-6 .5-3.500-4z" fill="#f0c6a4" stroke="#2a1c14" stroke-width="1.600"/>
<path d="M198.500 290l9 4 0 7-6 0-4-5z" fill="#e2b696" stroke="#2a1c14" stroke-width=".8"/>
<path d="M196.800 295.600l-3.800 5.100-8.200 3.800 1.200 8.800-2.500 12.700-3.200 11.400 26.600 1.300 1.300-12.700-.6-15.200 0-10.100-1.900-1.900-3.800 1.900z" fill="#2a374d" stroke="#10161f" stroke-width="1.600"/>
<path d="M189 305.500l6-2.500 4.500 7-1 8-9.500-.5zM188.500 321l9.500.5-1.500 14-10.500-.5zM201.500 316l4 .5-.5 19-4.500-.5z" fill="#4d6788" opacity=".75"/>
<path d="M191 309l4 4M190 326l5 3M192 331l3-2M202.500 320v6M203 329v4" stroke="#a9c0d8" stroke-width="1.100" opacity=".8"/>
<path d="M196.800 296l3.200 13M200.200 318.500v17M187.500 319.500l13 .8" stroke="#141c2c" stroke-width="1.100"/>
<g fill="#ecd890"><rect x="201.200" y="312.500" width="1.500" height="1.500"/><rect x="199.200" y="322" width="1.500" height="1.500"/><rect x="198.500" y="329" width="1.500" height="1.500"/><rect x="192" y="319" width="1.500" height="1.500"/><rect x="193" y="330" width="1.500" height="2"/><rect x="200.500" y="334" width="1.500" height="1.500"/><rect x="204" y="325" width="1.300" height="1.500"/></g>
<path d="M199.200 266l1 20 6.800 10.400 1 3.700 9.300 0 3.700-5.600 5.700-7.500 1.800-3.700 0-14-14-4z" fill="#f0c6a4" stroke="#2a1c14" stroke-width="1.500"/>
<path d="M210 295.200h5.500" stroke="#dca88c" stroke-width="1.200"/>
<path d="M200.100 252.100h14v1.900h8.800l1.900 3.200 3.700 2.800 2.400 4.700 1.800 1.400v7.900l-2.300 2.300-1.400-.4-.5-2.800-3.700-3.300-7.500-.9-5.600 1.800-3.700-2.300-7.500-1.900-1.400 7.500 1 6.500-2.800 6.500-3.300-1.800-.9-3.700-3.800-2.800-2.300-1.900v-3.800l2.300-.9v-8.400l1.900-3.700 2.800-3.700 4.700-1.900z" fill="#463020" stroke="#20130c" stroke-width="1.600"/>
<path d="M193 263c3-5 11-7.500 20-6M218 257c4 1 7 4 9 8M191 273c1-4 3-7 6-9" stroke="#6a4e3c" stroke-width="1.500" fill="none" opacity=".8"/>
<path d="M196 268c2-4 8-8 16-7.500M205 264.500c5-.5 10 .5 14 2.500M190.500 277l4 3M222 262c3 1.500 5 4 6.500 7" stroke="#2c1c12" stroke-width="1.100" fill="none" opacity=".75"/>
<rect x="205.800" y="276.300" width="6.300" height="4.500" fill="#fff"/><rect x="208" y="276.500" width="3.700" height="4.300" fill="#1f3a30"/><rect x="220.500" y="276.300" width="4.300" height="4.300" fill="#fff"/><rect x="223" y="276.500" width="1.900" height="4" fill="#2a4a3c"/>
<path d="M205.200 273.900l4-.6 4 .6M220.800 273.600l6 .2M205.600 276l6.600 0M220.500 276l4.500 0" stroke="#24160e" stroke-width="1.200" fill="none"/>
<path d="M222 277v8l-.4.900-3.800.9M206.400 288.600l1.600 2h9.300" stroke="#24160e" stroke-width="1.100" fill="none"/>
</g>
<path d="M242.500 273.100v13.500l3.100-2.700 2.300 4.800 2.500-1.100-2.200-4.600 4.500-.1z" fill="#ffffff" stroke="#80808c" stroke-width=".9" stroke-linejoin="round"/>
</svg>
</body></html>
